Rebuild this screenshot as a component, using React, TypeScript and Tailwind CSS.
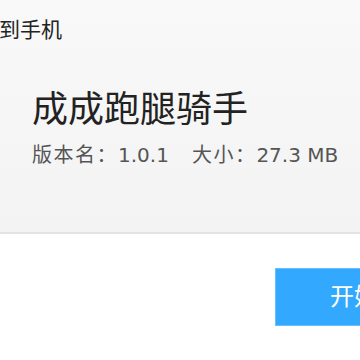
export default function App() {
  return (
    <div
      className="w-[360px] h-[360px] overflow-hidden bg-white text-[#333]"
      style={{ fontFamily: '"DejaVu Sans", "Noto Sans CJK SC", sans-serif' }}
    >
      {/* Top info panel */}
      <div className="h-[234px] bg-gradient-to-b from-[#f9f9f9] to-[#f3f3f3] border-b-2 border-[#e3e3e3]">
        <div className="pt-[16px] -ml-[43px] text-[21px] leading-[28px] text-[#222] whitespace-nowrap">
          发送到手机
        </div>
        <div className="pl-[32px] pt-[44px]">
          <h1 className="text-[36px] leading-[44px] text-[#222] whitespace-nowrap">成成跑腿骑手</h1>
          <div className="mt-[11px] flex items-center text-[20px] leading-[24px] text-[#555] whitespace-nowrap">
            <span>
              <span className="tracking-[1.5px]">版本名：</span>1.0.1
            </span>
            <span className="ml-[23px]">
              <span className="tracking-[1.5px]">大小：</span>27.3 MB
            </span>
          </div>
        </div>
      </div>

      {/* Action area */}
      <div className="flex justify-end pt-[34px]">
        <button className="w-[200px] h-[58px] -mr-[115px] bg-[#33a8ff] border border-[#66bfff] text-white text-[24px] text-left pl-[54px] whitespace-nowrap">
          开始下载
        </button>
      </div>
    </div>
  )
}
